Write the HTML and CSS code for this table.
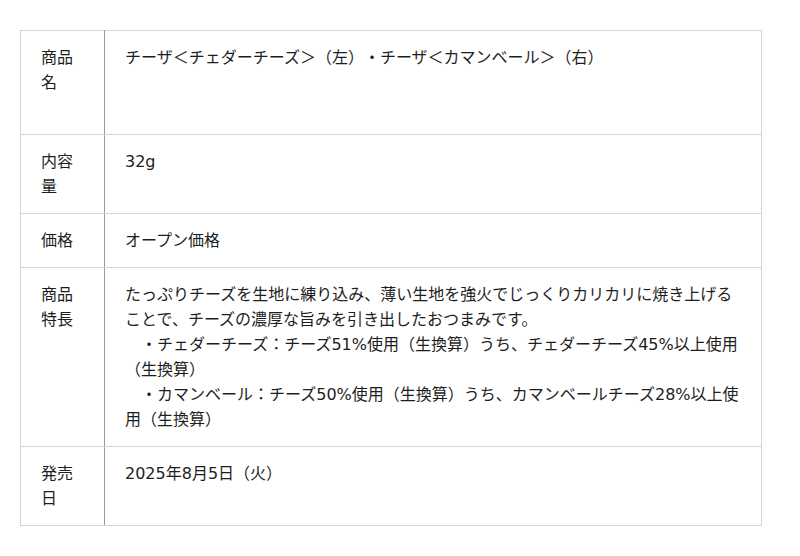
FILE: index.html
```html
<!DOCTYPE html>
<html lang="ja">
<head>
<meta charset="utf-8">
<link rel="stylesheet" href="styles.css">
</head>
<body>
<div class="wrap">
<table class="spec">
  <tr class="tall">
    <th>商品名</th>
    <td>チーザ＜チェダーチーズ＞（左）・チーザ＜カマンベール＞（右）</td>
  </tr>
  <tr>
    <th>内容量</th>
    <td>32g</td>
  </tr>
  <tr>
    <th>価格</th>
    <td>オープン価格</td>
  </tr>
  <tr>
    <th>商品特長</th>
    <td>たっぷりチーズを生地に練り込み、薄い生地を強火でじっくりカリカリに焼き上げることで、チーズの濃厚な旨みを引き出したおつまみです。<br>　・チェダーチーズ：チーズ51%使用（生換算）うち、チェダーチーズ45%以上使用（生換算）<br>　・カマンベール：チーズ50%使用（生換算）うち、カマンベールチーズ28%以上使用（生換算）</td>
  </tr>
  <tr>
    <th>発売日</th>
    <td>2025年8月5日（火）</td>
  </tr>
</table>
</div>
</body>
</html>
```
FILE: styles.css
```css
html, body {
  margin: 0;
  padding: 0;
  background: #fff;
}
.wrap {
  padding: 30px 20px;
}
.spec {
  width: 742px;
  border-collapse: collapse;
  font-family: "DejaVu Sans", "Noto Sans CJK JP", sans-serif;
  font-size: 16px;
  line-height: 25px;
  color: #1e1e1e;
  text-spacing-trim: space-all;
}
.spec th,
.spec td {
  border: 1px solid #d4d4d4;
  padding: 14px 20px;
  vertical-align: top;
  text-align: left;
  font-weight: normal;
}
.spec th {
  width: 43px;
  border-right-color: #9a9a9a;
}
.spec tr.tall td {
  height: 75px;
}
```
